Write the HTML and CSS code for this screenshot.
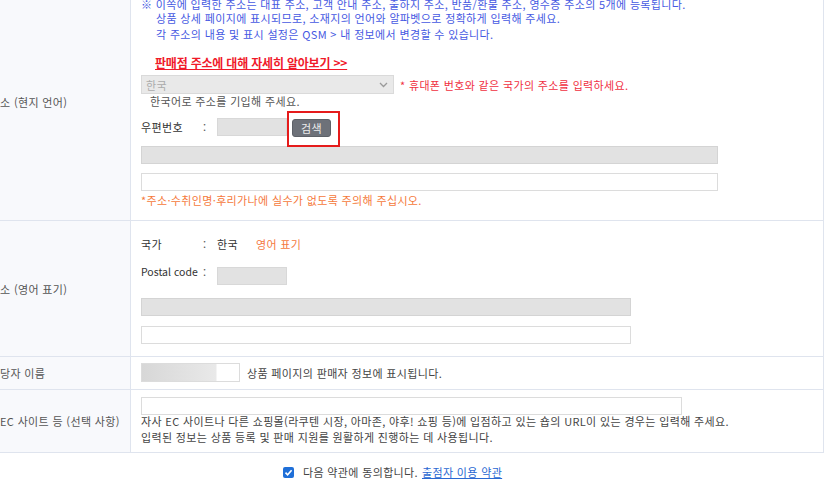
FILE: index.html
```html
<!DOCTYPE html>
<html lang="ko">
<head>
<meta charset="utf-8">
<title>판매점 주소</title>
<link rel="stylesheet" href="styles.css">
</head>
<body>
<div class="form">
  <div class="row row-local">
    <div class="label">소 (현지 언어)</div>
    <div class="value">
      <div class="notice">
        <p class="n1">※ 이쪽에 입력한 주소는 대표 주소, 고객 안내 주소, 출하지 주소, 반품/환불 주소, 영수증 주소의 5개에 등록됩니다.</p>
        <p class="n2">상품 상세 페이지에 표시되므로, 소재지의 언어와 알파벳으로 정확하게 입력해 주세요.</p>
        <p class="n2">각 주소의 내용 및 표시 설정은 QSM &gt; 내 정보에서 변경할 수 있습니다.</p>
      </div>
      <a class="more" href="#">판매점 주소에 대해 자세히 알아보기 &gt;&gt;</a>
      <div class="country-row">
        <div class="select"><span>한국</span>
          <svg class="chev" width="9" height="6" viewBox="0 0 9 6"><polyline points="1,1 4.5,4.5 8,1" fill="none" stroke="#9a9a9a" stroke-width="1.3"/></svg>
        </div>
        <span class="warn">* 휴대폰 번호와 같은 국가의 주소를 입력하세요.</span>
      </div>
      <div class="hint">한국어로 주소를 기입해 주세요.</div>
      <div class="zip-row">
        <span class="fl">우편번호</span><span class="colon">:</span><span class="zip"></span><button class="search" type="button">검색</button>
        <span class="highlight"></span>
      </div>
      <div class="bar bar-wide"></div>
      <div class="input input-wide"></div>
      <div class="caution">*주소·수취인명·후리가나에 실수가 없도록 주의해 주십시오.</div>
    </div>
  </div>

  <div class="row row-en">
    <div class="label">소 (영어 표기)</div>
    <div class="value">
      <div class="country-en">
        <span class="fl">국가</span><span class="colon">:</span><span class="cval">한국</span><span class="orange">영어 표기</span>
      </div>
      <div class="postal-row">
        <span class="fl fl-latin">Postal code</span><span class="colon">:</span><span class="zip zip-en"></span>
      </div>
      <div class="bar bar-mid"></div>
      <div class="input input-mid"></div>
    </div>
  </div>

  <div class="row row-name">
    <div class="label">당자 이름</div>
    <div class="value name-value">
      <div class="input name-input"></div>
      <span class="name-text">상품 페이지의 판매자 정보에 표시됩니다.</span>
    </div>
  </div>

  <div class="row row-ec">
    <div class="label">EC 사이트 등 (선택 사항)</div>
    <div class="value">
      <div class="input input-ec"></div>
      <p class="ec-text">자사 EC 사이트나 다른 쇼핑몰(라쿠텐 시장, 아마존, 야후! 쇼핑 등)에 입점하고 있는 숍의 URL이 있는 경우는 입력해 주세요.</p>
      <p class="ec-text">입력된 정보는 상품 등록 및 판매 지원를 원활하게 진행하는 데 사용됩니다.</p>
    </div>
  </div>
</div>

<div class="agree">
  <svg class="check" width="11" height="11" viewBox="0 0 11 11"><rect x="0" y="0" width="11" height="11" rx="2" fill="#1f6fd8"/><polyline points="2.5,5.6 4.6,7.8 8.6,3.2" fill="none" stroke="#fff" stroke-width="1.6"/></svg>
  <span class="agree-text">다음 약관에 동의합니다.</span>
  <a class="agree-link" href="#">출점자 이용 약관</a>
</div>
</body>
</html>
```

FILE: styles.css
```css
* { box-sizing: border-box; }

html, body {
  margin: 0;
  padding: 0;
  background: #fff;
  overflow: hidden;
}

body {
  font-family: "Noto Sans CJK KR", "Noto Sans", sans-serif;
  font-size: 11px;
  letter-spacing: 0.35px;
  color: #444;
  width: 832px;
  height: 479px;
}

p { margin: 0; }

.form {
  width: 824px;
  margin-top: -17px;
  border-top: 1px solid #dfe4ee;
  border-right: 1px solid #dfe4ee;
}

.row {
  display: grid;
  grid-template-columns: 131px 1fr;
  border-bottom: 1px solid #dfe4ee;
}

.label {
  background: #f8f9fc;
  border-right: 1px solid #dfe4ee;
  display: flex;
  align-items: center;
  white-space: nowrap;
  overflow: hidden;
  color: #555;
  font-size: 11px;
}

.value {
  padding-left: 10px;
}

/* row 1 */
.row-local .value {
  padding-top: 10px;
  padding-bottom: 13px;
}

.notice {
  color: #4659e2;
  white-space: nowrap;
}

.notice .n1 {
  margin-top: 4px;
  line-height: 12px;
}

.notice .n2 {
  padding-left: 15px;
  line-height: 16px;
}

.more {
  display: block;
  margin-top: 13px;
  margin-left: 14px;
  width: max-content;
  color: #f01a2a;
  font-weight: 700;
  font-size: 12px;
  letter-spacing: -0.2px;
  line-height: 16px;
  text-decoration: underline;
}

.country-row {
  display: flex;
  align-items: center;
  margin-top: 4px;
  height: 19px;
}

.select {
  width: 253px;
  height: 19px;
  background: #e9e9e9;
  border: 1px solid #dadada;
  display: flex;
  align-items: center;
  justify-content: space-between;
  padding: 0 5px 0 4px;
  color: #ababab;
  font-size: 11px;
}

.warn {
  margin-left: 6px;
  color: #f0303f;
  white-space: nowrap;
}

.hint {
  line-height: 14px;
  padding-left: 9px;
  color: #555;
}

.zip-row {
  position: relative;
  display: flex;
  align-items: flex-start;
  margin-top: 10px;
  height: 19px;
}

.fl {
  width: 62px;
  flex: none;
  color: #333;
  white-space: nowrap;
}

.fl-latin {
  letter-spacing: 0;
  font-size: 10.5px;
}

.zip-row .fl,
.zip-row .colon { line-height: 19px; }

.colon {
  width: 14px;
  flex: none;
  color: #555;
}

.zip {
  width: 70px;
  height: 18px;
  background: #e2e2e2;
  border: 1px solid #d8d8d8;
}

.search {
  margin: 1px 0 0 5px;
  width: 39px;
  height: 18px;
  padding: 0;
  border: 1px solid #5d6168;
  border-radius: 3px;
  background: #6d7179;
  color: #ececec;
  font-family: inherit;
  font-size: 11px;
  letter-spacing: 0.4px;
  line-height: 16px;
}

.highlight {
  position: absolute;
  left: 146px;
  top: -7px;
  width: 53px;
  height: 36px;
  border: 2px solid #e51b1b;
}

.bar {
  height: 18px;
  background: #e2e2e2;
  border: 1px solid #d4d4d4;
}

.input {
  height: 18px;
  background: #fff;
  border: 1px solid #dcdcdc;
}

.bar-wide { width: 577px; margin-top: 9px; }
.input-wide { width: 577px; margin-top: 9px; }

.caution {
  margin-top: 2px;
  line-height: 14px;
  color: #f5793b;
}

/* row 2 */
.row-en .value {
  padding-top: 15px;
  padding-bottom: 12px;
}

.country-en {
  display: flex;
  line-height: 16px;
}

.cval { width: 39px; color: #333; }

.orange { color: #f5793f; }

.postal-row {
  display: flex;
  align-items: flex-start;
  margin-top: 12px;
  line-height: 16px;
}

.zip-en { margin-top: 3px; }

.bar-mid { width: 490px; margin-top: 13px; }
.input-mid { width: 490px; margin-top: 10px; }

/* row 3 */
.name-value {
  display: flex;
  align-items: center;
  padding-top: 6px;
  padding-bottom: 7px;
}

.name-input {
  width: 99px;
  height: 19px;
  background: linear-gradient(to right, #d7d7d7, #e9e9e9 74px, #fff 75px);
}

.name-text {
  margin-left: 7px;
  color: #444;
}

/* row 4 */
.row-ec .value {
  padding-top: 7px;
  padding-bottom: 7px;
}

.input-ec { width: 541px; }

.ec-text {
  line-height: 15.5px;
  color: #444;
  white-space: nowrap;
}

.input-ec + .ec-text { margin-top: -1px; }

/* agreement */
.agree {
  display: flex;
  align-items: center;
  margin-top: 11px;
  margin-left: 283px;
  height: 16px;
  line-height: 16px;
}

.check { flex: none; }

.agree-text {
  margin-left: 9px;
  color: #444;
}

.agree-link {
  margin-left: 4px;
  color: #2a68d2;
  text-decoration: underline;
}
```
